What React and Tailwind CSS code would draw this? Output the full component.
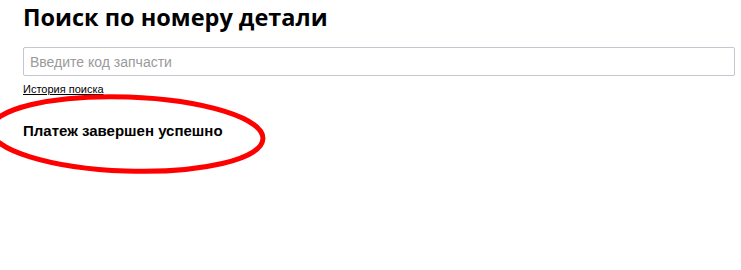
import React from 'react';

const App = () => {
  return (
    <div className="relative min-h-[270px] w-full bg-white pl-[23px] pr-[6px] pt-[2px] text-black font-['Liberation_Sans',Arial,sans-serif]">
      <h1 className="m-0 text-[23.5px] leading-[30px] font-bold font-['Open_Sans','Noto_Sans',sans-serif]">
        Поиск по номеру детали
      </h1>

      <input
        type="text"
        placeholder="Введите код запчасти"
        className="mt-[15px] block h-[29px] w-full rounded-[2px] border border-[#c3c7cf] bg-white px-[6px] text-[14px] text-black outline-none placeholder:text-[#9a9a9a]"
      />

      <a href="#" className="mt-[3px] inline-block text-[11px] leading-[14px] text-black underline">
        История поиска
      </a>

      <p className="m-0 mt-[22px] text-[15px] leading-[18px] font-bold">
        Платеж завершен успешно
      </p>

      <svg
        className="pointer-events-none absolute left-0 top-0 h-[270px] w-[741px]"
        viewBox="0 0 741 270"
      >
        <ellipse
          cx="127"
          cy="134"
          rx="136"
          ry="37"
          fill="none"
          stroke="#ff0000"
          strokeWidth="5"
          transform="rotate(2 127 134)"
        />
      </svg>
    </div>
  );
};

export default App;
